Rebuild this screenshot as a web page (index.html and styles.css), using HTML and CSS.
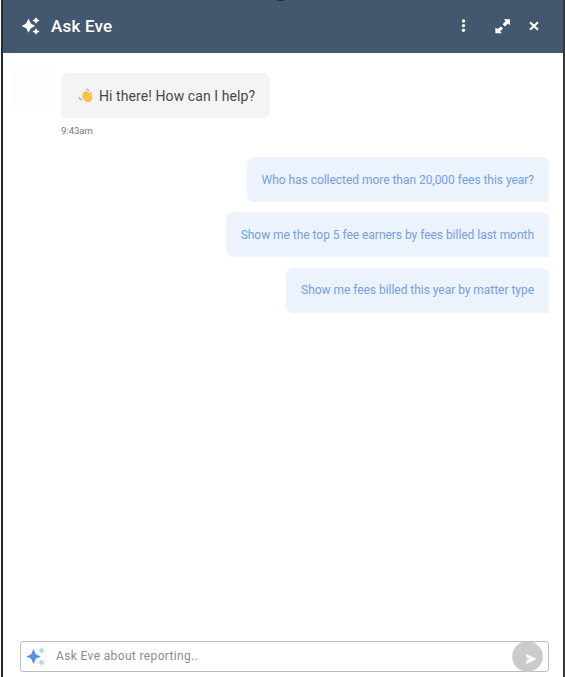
FILE: index.html
```html
<!DOCTYPE html>
<html lang="en">
<head>
<meta charset="utf-8">
<title>Ask Eve</title>
<link rel="stylesheet" href="styles.css">
</head>
<body>
<div class="panel">
  <header class="header">
    <span class="notch"></span>
    <svg class="logo" width="20" height="18" viewBox="0 0 20 18" fill="#fff">
      <path d="M7.5 1.8 9.9 6.6 14.2 9 9.9 11.2 7.5 15.8 5.1 11.2.6 9 5.1 6.6Z"/>
      <path d="M15 .2 16.3 2.2 18.6 3.5 16.3 4.8 15 6.8 13.7 4.8 11.4 3.5 13.7 2.2Z"/>
      <path d="M15 11.2 16.3 13.2 18.6 14.5 16.3 15.8 15 17.8 13.7 15.8 11.4 14.5 13.7 13.2Z"/>
    </svg>
    <h1 class="title">Ask Eve</h1>
    <nav class="actions">
      <svg class="more" width="5" height="14" viewBox="0 0 5 14" fill="#fff">
        <circle cx="2.5" cy="2" r="1.7"/><circle cx="2.5" cy="6.6" r="1.7"/><circle cx="2.5" cy="11.2" r="1.7"/>
      </svg>
      <svg class="expand" width="16" height="15" viewBox="0 0 16 15">
        <path d="M9 .2h6v6L13 4.6 10 7.4 7.6 5.2 10.6 2.2ZM6 7.4 8 9.6 5.2 12.2 6.8 14.2H.4V8.4L2.4 10Z" fill="#fff"/>
      </svg>
      <svg class="close" width="10" height="10" viewBox="0 0 10 10">
        <path d="M1 1.2 9 8.8M9 1.2 1 8.8" stroke="#fff" stroke-width="2.1"/>
      </svg>
    </nav>
  </header>
  <main class="chat">
    <div class="incoming">
      <div class="avatar"></div>
      <div>
        <div class="greeting">
          <svg class="wave" width="15" height="15" viewBox="0 0 15 15">
            <path d="M8 1.3Q10 .9 10.9 3M1.3 9Q1.4 11.3 4 11.9" fill="none" stroke="#9dbcf0" stroke-width="1.7"/>
            <path d="M4.6 6.3Q4 5.1 5.1 4.7L5.8 5Q5.6 3.4 6.9 3.2L8 3.5Q8.9 2.4 9.9 3.6L11.5 5.4 11.7 4.1Q12.5 2.9 13.3 4.3L14.4 9Q14.6 12.8 12 14 9.2 15.1 6.7 12.7L4.4 9.8Q3.6 8.6 4.6 7.8Z" fill="#fbc14d"/>
            <path d="M6.2 5.3 8.4 7.7M8 4.4 9.9 6.8" fill="none" stroke="#eead43" stroke-width=".5"/>
          </svg>
          <span class="hello">Hi there! How can I help?</span>
        </div>
        <div class="time">9:43am</div>
      </div>
    </div>
    <div class="suggestions">
      <div class="chip"><span>Who has collected more than 20,000 fees this year?</span></div>
      <div class="chip"><span>Show me the top 5 fee earners by fees billed last month</span></div>
      <div class="chip"><span>Show me fees billed this year by matter type</span></div>
    </div>
  </main>
  <footer class="composer">
    <svg class="spark" width="20" height="20" viewBox="0 0 20 20">
      <path d="M7.5 2 10 7.4 15 9.5 10 11.6 7.5 17 5 11.6 0 9.5 5 7.4Z" fill="#5c90e0"/>
      <path d="M15.5 0 16.8 2.2 19 3.5 16.8 4.8 15.5 7 14.2 4.8 12 3.5 14.2 2.2ZM15.5 12 16.8 14.2 19 15.5 16.8 16.8 15.5 19 14.2 16.8 12 15.5 14.2 14.2Z" fill="#b9cff5"/>
    </svg>
    <span class="placeholder">Ask Eve about reporting..</span>
    <svg class="send" width="31" height="31" viewBox="0 0 31 31">
      <circle cx="15.5" cy="15.5" r="15.3" fill="#cbcbcb"/>
      <path d="M13.7 12.8 24.5 18 13.7 23.2 15 19 19 18 15 17Z" fill="#fff"/>
    </svg>
  </footer>
</div>
</body>
</html>
```
FILE: styles.css
```css
* { box-sizing: border-box; }
body { margin: 0; background: #fff; font-family: Roboto, sans-serif; overflow: hidden; }
.panel {
  height: 677px;
  margin-left: 1px;
  display: flex;
  flex-direction: column;
  border-left: 2px solid #202a30;
  border-right: 2px solid #35383b;
}
.header {
  position: relative;
  height: 53px;
  flex: none;
  display: flex;
  align-items: center;
  padding: 0 24px 0 18px;
  background: #43586f;
}
.notch { position: absolute; left: 274px; top: 0; width: 7px; height: 1px; background: #252e38; }
.logo { margin-top: -2px; }
.title { margin: -2px 0 0 10px; font-size: 17px; line-height: 20px; font-weight: 500; letter-spacing: .2px; color: #fff; white-space: nowrap; }
.actions { margin: -1px 0 0 auto; display: flex; align-items: center; }
.expand { margin-left: 29px; }
.close { margin-left: 18px; }
.chat { flex: 1; padding: 17px 14px 0 10px; }
.incoming { display: flex; }
.avatar { width: 41px; height: 36px; margin-right: 7px; background: #fdfdfd; }
.greeting {
  width: 209px;
  height: 45px;
  margin-top: 3px;
  padding-left: 17px;
  display: flex;
  align-items: center;
  border-radius: 7px 7px 7px 0;
  background: #f4f4f4;
}
.hello { margin-left: 6px; font-size: 14px; letter-spacing: .08px; color: #484848; white-space: nowrap; }
.time { margin-top: 6px; font-size: 9.5px; line-height: 13px; color: #777; }
.suggestions { margin-top: 20px; display: flex; flex-direction: column; align-items: flex-end; gap: 10.3px; }
.chip {
  height: 45px;
  padding: 0 15px;
  display: flex;
  align-items: center;
  border-radius: 7px 7px 0 7px;
  background: #ecf3fc;
  font-size: 12px;
  letter-spacing: -.035px;
  color: #73a0e6;
  white-space: nowrap;
}
.composer {
  flex: none;
  height: 31px;
  margin: 0 14px 5px 17px;
  padding: 0 5px;
  display: flex;
  align-items: center;
  border: 1px solid #bdbdbd;
  border-radius: 3px;
}
.placeholder { margin: -2px 0 0 10px; font-size: 12px; letter-spacing: .36px; color: #8c8c8c; }
.send { flex: none; margin-left: auto; }
```
